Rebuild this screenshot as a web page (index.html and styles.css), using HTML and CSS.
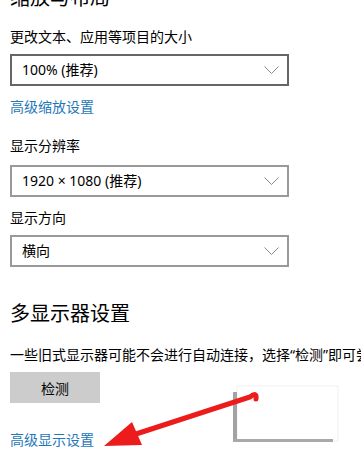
FILE: index.html
```html
<!DOCTYPE html>
<html lang="zh-CN">
<head>
<meta charset="utf-8">
<title>显示设置</title>
<link rel="stylesheet" href="styles.css">
</head>
<body>
<main class="page">
  <h2 class="heading heading-top">缩放与布局</h2>
  <div class="label label-first">更改文本、应用等项目的大小</div>
  <div class="select select-active">
    <span class="select-text">100% (推荐)</span>
    <svg class="chev" width="15" height="8" viewBox="0 0 15 8"><polyline points="0.5,0.5 7.5,7.5 14.5,0.5" fill="none" stroke="#8a8a8a" stroke-width="1"/></svg>
  </div>
  <a class="link link-first" href="#">高级缩放设置</a>
  <div class="label label-res">显示分辨率</div>
  <div class="select select-res">
    <span class="select-text">1920 × 1080 (推荐)</span>
    <svg class="chev" width="15" height="8" viewBox="0 0 15 8"><polyline points="0.5,0.5 7.5,7.5 14.5,0.5" fill="none" stroke="#8a8a8a" stroke-width="1"/></svg>
  </div>
  <div class="label label-ori">显示方向</div>
  <div class="select">
    <span class="select-text">横向</span>
    <svg class="chev" width="15" height="8" viewBox="0 0 15 8"><polyline points="0.5,0.5 7.5,7.5 14.5,0.5" fill="none" stroke="#8a8a8a" stroke-width="1"/></svg>
  </div>
  <h2 class="heading heading-multi">多显示器设置</h2>
  <p class="para">一些旧式显示器可能不会进行自动连接，选择“检测”即可尝试手动连接。</p>
  <button class="btn" type="button">检测</button>
  <a class="link link-last" href="#">高级显示设置</a>
</main>
<svg class="overlay" width="361" height="463" viewBox="0 0 361 463">
  <rect x="237" y="386" width="101" height="55" fill="none" stroke="#f1f1f1" stroke-width="1"/>
  <rect x="233" y="392" width="4" height="50" fill="#a3a3a3"/>
  <rect x="233" y="439" width="100" height="3" fill="#a9a9a9"/>
  <path d="M136 434 L250 397 Q257 391 256 399" fill="none" stroke="#ec1c1c" stroke-width="5" stroke-linecap="round"/>
  <polygon points="104,446 132,422 142,445" fill="#ec1c1c"/>
</svg>
</body>
</html>
```

FILE: styles.css
```css
html, body {
  margin: 0;
  padding: 0;
  background: #ffffff;
  overflow: hidden;
}
body {
  width: 361px;
  height: 463px;
  position: relative;
  font-family: "Noto Sans", "Noto Sans CJK SC", sans-serif;
  color: #000;
}
.page {
  padding-left: 10px;
  display: flex;
  flex-direction: column;
  align-items: flex-start;
}
.heading {
  font-size: 20px;
  line-height: 28px;
  font-weight: 400;
  margin: 0;
  white-space: nowrap;
}
.heading-top { margin-top: -16px; }
.heading-multi { margin-top: 33px; }
.label {
  font-size: 14px;
  line-height: 20px;
  white-space: nowrap;
}
.label-first { margin-top: 15px; }
.label-res { margin-top: 19px; }
.label-ori { margin-top: 11px; }
.select {
  box-sizing: border-box;
  width: 279px;
  height: 32px;
  border: 2px solid #999999;
  margin-top: 7px;
  display: flex;
  align-items: center;
  justify-content: space-between;
  padding: 0 8px 0 10px;
  font-size: 14px;
}
.select-active { border-color: #666666; }
.select-res { margin-top: 9px; }
.select-text { line-height: 20px; white-space: nowrap; }
.chev { display: block; }
.link {
  font-size: 14px;
  line-height: 20px;
  color: #1f78b8;
  text-decoration: none;
  white-space: nowrap;
}
.link-first { margin-top: 11px; }
.link-last { margin-top: 27px; }
.para {
  margin: 17px 0 0 0;
  font-size: 14px;
  line-height: 20px;
  white-space: nowrap;
}
.btn {
  margin-top: 7px;
  width: 90px;
  height: 31px;
  border: none;
  background: #cccccc;
  font-family: inherit;
  font-size: 14px;
  color: #000;
  padding: 0;
}
.overlay {
  position: absolute;
  left: 0;
  top: 0;
  pointer-events: none;
}
```
